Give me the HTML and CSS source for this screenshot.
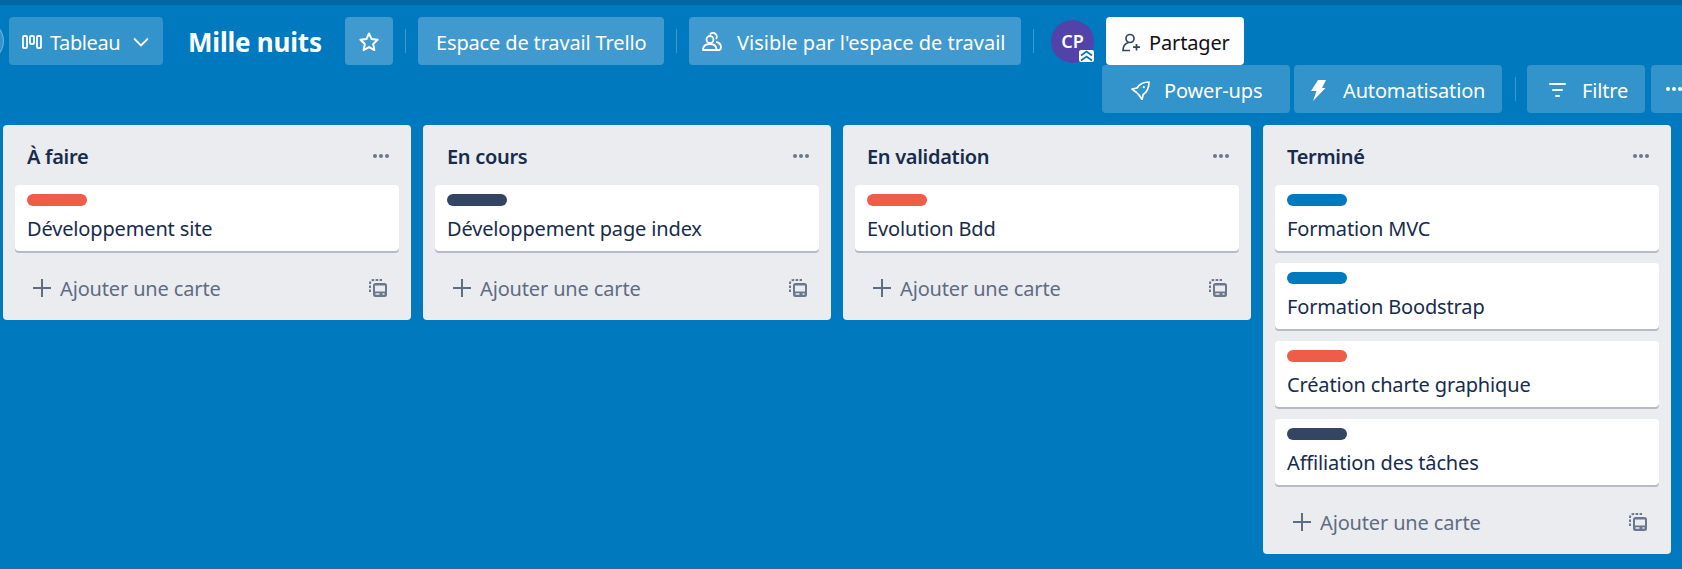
FILE: index.html
```html
<!DOCTYPE html>
<html lang="fr">
<head>
    <meta charset="UTF-8">
    <meta name="viewport" content="width=device-width, initial-scale=1.0">
    <title>Mille nuits</title>
    <link rel="stylesheet" href="styles.css">
</head>
<body>

<svg class="defs" width="0" height="0">
    <symbol id="template" viewBox="0 0 18 18">
        <path d="M1 13V4.500C1 2.500 2.500 1 4.500 1H13" fill="none" stroke="currentColor" stroke-width="2" stroke-dasharray="2.600 1.400"/>
        <path fill-rule="evenodd" d="M6.500 4h9A2.500 2.500 0 0 1 18 6.500v9a2.500 2.500 0 0 1-2.500 2.500h-9A2.500 2.500 0 0 1 4 15.500v-9A2.500 2.500 0 0 1 6.500 4zM6 6.500v6h10v-6zM6.500 14.200v1.500h4v-1.500zM13.500 14.200v1.500h2v-1.500z" fill="currentColor"/>
    </symbol>
</svg>

<div class="topbar"></div>

<header class="board-header">
    <div class="header-row">
        <span class="edge-avatar"></span>
        <button class="btn btn-board">
            <svg class="ico" width="20" height="14" viewBox="0 0 20 14" fill="none" stroke="#fff" stroke-width="1.800">
                <rect x="1" y="1" width="4" height="12" rx="1"/>
                <rect x="8" y="1" width="4" height="8" rx="1"/>
                <rect x="15" y="1" width="4" height="12" rx="1"/>
            </svg>
            <span>Tableau</span>
            <svg class="chevron" width="16" height="10" viewBox="0 0 16 10" fill="none" stroke="#fff" stroke-width="1.800">
                <path d="M1 1.500l7 7 7-7"/>
            </svg>
        </button>
        <h1 class="board-name">Mille nuits</h1>
        <button class="btn btn-star">
            <svg width="22" height="22" viewBox="0 0 22 22" fill="none" stroke="#fff" stroke-width="2" stroke-linejoin="round">
                <path d="M11 2.500l2.600 5.600 6 .7-4.400 4.200 1.200 6.100-5.400-3-5.400 3 1.200-6.100-4.400-4.200 6-.7z"/>
            </svg>
        </button>
        <span class="sep"></span>
        <button class="btn btn-light btn-workspace">Espace de travail Trello</button>
        <span class="sep"></span>
        <button class="btn btn-light btn-visible">
            <svg width="20" height="20" viewBox="0 0 20 20" fill="none" stroke="#fff" stroke-width="1.800">
                <circle cx="8" cy="7.500" r="3.500"/>
                <path d="M1 18c0-3.500 2.500-6 7-6s6.500 2.500 6.500 6z" stroke-linejoin="round"/>
                <path d="M8 2.500a3.600 3.600 0 0 1 5.500-.5 3.600 3.600 0 0 1 .5 5M14 10c3 .5 5 2.500 5 5.500 0 1-.5 2-1.500 2.500h-3"/>
            </svg>
            <span>Visible par l'espace de travail</span>
        </button>
        <span class="sep"></span>
        <div class="avatar">
            CP
            <svg class="avatar-badge" width="15" height="12" viewBox="0 0 15 12">
                <rect width="15" height="12" rx="2" fill="#fff"/>
                <path d="M2 5.500l5.500-4 5.500 4M2 10.500l5.500-4 5.500 4" fill="none" stroke="#0079bf" stroke-width="1.800"/>
            </svg>
        </div>
        <button class="btn btn-share">
            <svg width="19" height="19" viewBox="0 0 19 19" fill="none" stroke="#344563" stroke-width="1.700">
                <circle cx="8" cy="5.500" r="4"/>
                <path d="M6.500 9.500C3 10.500 1 13.500 1 17.500h7M14.500 11v6.500M11 14.200h7"/>
            </svg>
            <span>Partager</span>
        </button>
    </div>

    <div class="header-row tools-row">
        <button class="btn btn-powerups">
            <svg width="19" height="19" viewBox="0 0 19 19" fill="none" stroke="#fff" stroke-width="1.700" stroke-linejoin="round">
                <path d="M18 1C12.500 1 8.500 3 6 7L1 8l4.500 3.500 2.500 2.500 3 4.500 1.200-5C16 11 18 7 18 1z"/>
                <circle cx="12.800" cy="6.200" r="1.100" fill="#fff" stroke="none"/>
            </svg>
            <span>Power-ups</span>
        </button>
        <button class="btn btn-auto">
            <svg width="15" height="21" viewBox="0 0 15 21" fill="#fff">
                <path d="M7 0h8l-4 8h3.500L2 21l3.500-10H0z"/>
            </svg>
            <span>Automatisation</span>
        </button>
        <span class="sep"></span>
        <button class="btn btn-filter">
            <svg width="17" height="14" viewBox="0 0 17 14" fill="#fff">
                <rect width="17" height="2" rx="1"/>
                <rect x="3" y="6" width="11" height="2" rx="1"/>
                <rect x="6" y="12" width="5" height="2" rx="1"/>
            </svg>
            <span>Filtre</span>
        </button>
        <button class="btn btn-more"><span class="dots"></span></button>
    </div>
</header>

<main class="board">
    <section class="list">
        <div class="list-head"><h2>À faire</h2><span class="dots"></span></div>
        <div class="card"><span class="label red"></span><p>Développement site</p></div>
        <div class="list-foot">
            <span class="add"><span class="plus"></span>Ajouter une carte</span>
            <svg class="tpl" width="18" height="18"><use href="#template"/></svg>
        </div>
    </section>

    <section class="list">
        <div class="list-head"><h2>En cours</h2><span class="dots"></span></div>
        <div class="card"><span class="label navy"></span><p>Développement page index</p></div>
        <div class="list-foot">
            <span class="add"><span class="plus"></span>Ajouter une carte</span>
            <svg class="tpl" width="18" height="18"><use href="#template"/></svg>
        </div>
    </section>

    <section class="list">
        <div class="list-head"><h2>En validation</h2><span class="dots"></span></div>
        <div class="card"><span class="label red"></span><p>Evolution Bdd</p></div>
        <div class="list-foot">
            <span class="add"><span class="plus"></span>Ajouter une carte</span>
            <svg class="tpl" width="18" height="18"><use href="#template"/></svg>
        </div>
    </section>

    <section class="list">
        <div class="list-head"><h2>Terminé</h2><span class="dots"></span></div>
        <div class="card"><span class="label blue"></span><p>Formation MVC</p></div>
        <div class="card"><span class="label blue"></span><p>Formation Boodstrap</p></div>
        <div class="card"><span class="label red"></span><p>Création charte graphique</p></div>
        <div class="card"><span class="label navy"></span><p>Affiliation des tâches</p></div>
        <div class="list-foot">
            <span class="add"><span class="plus"></span>Ajouter une carte</span>
            <svg class="tpl" width="18" height="18"><use href="#template"/></svg>
        </div>
    </section>
</main>

</body>
</html>
```

FILE: styles.css
```css
* {
    box-sizing: border-box;
}

html, body {
    height: 100%;
}

body {
    margin: 0;
    background-color: #0079bf;
    color: #172b4d;
    font-family: "Noto Sans", "Open Sans", sans-serif;
    font-size: 20px;
    letter-spacing: -0.15px;
    overflow: hidden;
}

.defs {
    position: absolute;
}

.topbar {
    height: 5px;
    background-color: #0067a3;
}

.board-header {
    padding-top: 12px;
}

.header-row {
    display: flex;
    align-items: center;
    height: 48px;
}

.tools-row {
    margin-left: 1102px;
    width: 620px;
}

.btn {
    display: flex;
    align-items: center;
    flex-shrink: 0;
    height: 48px;
    padding: 2px 18px 0;
    margin-right: 6px;
    border: none;
    border-radius: 4px;
    background-color: rgba(255, 255, 255, 0.2);
    color: #fff;
    font-family: inherit;
    font-size: 20px;
    letter-spacing: inherit;
    white-space: nowrap;
    cursor: pointer;
}

.btn svg {
    flex-shrink: 0;
}

.btn-light {
    background-color: rgba(255, 255, 255, 0.25);
}

.edge-avatar {
    width: 42px;
    height: 42px;
    margin-left: -38px;
    margin-right: 5px;
    border-radius: 50%;
    background-color: rgba(255, 255, 255, 0.2);
    border: 1px solid rgba(255, 255, 255, 0.3);
    flex-shrink: 0;
}

.btn-board {
    width: 154px;
    padding: 2px 14px 0 13px;
    margin-right: 25px;
    letter-spacing: -0.4px;
}

.btn-board .ico {
    margin-right: 8px;
}

.btn-board .chevron {
    margin-left: auto;
}

.board-name {
    width: 133px;
    margin: 0 24px 0 0;
    padding-top: 2px;
    color: #fff;
    font-size: 26px;
    font-weight: 700;
    letter-spacing: -0.2px;
    white-space: nowrap;
}

.btn-star {
    width: 48px;
    padding: 2px 13px 0;
    margin-right: 0;
    background-color: rgba(255, 255, 255, 0.25);
}

.sep {
    width: 1px;
    height: 24px;
    margin: 0 12px;
    background-color: rgba(255, 255, 255, 0.24);
    flex-shrink: 0;
}

.btn-workspace {
    width: 246px;
    margin-right: 0;
}

.btn-visible {
    width: 332px;
    margin-right: 0;
    padding: 2px 13px 0;
    letter-spacing: 0;
}

.btn-visible svg {
    margin-right: 15px;
}

.avatar {
    position: relative;
    display: flex;
    align-items: center;
    justify-content: center;
    width: 43px;
    height: 43px;
    margin: 0 12px 0 5px;
    border-radius: 50%;
    background-color: #5243aa;
    color: #fff;
    font-size: 18px;
    font-weight: 600;
    flex-shrink: 0;
}

.avatar-badge {
    position: absolute;
    right: 0;
    bottom: 1px;
}

.btn-share {
    width: 138px;
    margin-right: 0;
    padding: 2px 16px 0;
    background-color: #fff;
    color: #111;
}

.btn-share svg {
    margin-right: 8px;
}

.btn-powerups {
    width: 188px;
    margin-right: 4px;
    padding: 2px 0 0 29px;
}

.btn-powerups svg {
    margin-right: 14px;
}

.btn-auto {
    width: 208px;
    padding: 2px 0 0 17px;
}

.btn-auto svg {
    margin-right: 17px;
}

.tools-row .sep {
    margin: 0 11px 0 7px;
}

.btn-filter {
    width: 118px;
    padding: 2px 0 0 22px;
}

.btn-filter svg {
    margin-right: 16px;
}

.btn-more {
    width: 48px;
    padding: 0 0 0 15px;
    margin-right: 0;
}

.dots,
.dots::before,
.dots::after {
    display: block;
    width: 4px;
    height: 4px;
    border-radius: 50%;
    background-color: currentColor;
}

.dots {
    position: relative;
    margin: 0 6px;
    flex-shrink: 0;
}

.dots::before,
.dots::after {
    content: "";
    position: absolute;
    top: 0;
}

.dots::before {
    left: -6px;
}

.dots::after {
    left: 6px;
}

.board {
    display: flex;
    align-items: flex-start;
    gap: 12px;
    margin-top: 12px;
    padding-left: 3px;
}

.list {
    width: 408px;
    flex-shrink: 0;
    padding: 0 12px;
    border-radius: 4px;
    background-color: #ebecf0;
}

.list-head {
    display: flex;
    align-items: center;
    justify-content: space-between;
    height: 60px;
    padding: 2px 10px 0 12px;
    color: #6b778c;
}

.list-head h2 {
    margin: 0;
    color: #172b4d;
    font-size: 20px;
    font-weight: 600;
    letter-spacing: -0.3px;
}

.card {
    height: 66px;
    margin-bottom: 12px;
    padding: 9px 12px 0;
    border-radius: 4px;
    background-color: #fff;
    box-shadow: 0 2px 0 #b6b9c7;
}

.card p {
    margin: 0;
    padding-top: 10px;
    line-height: 26px;
}

.label {
    display: block;
    width: 60px;
    height: 12px;
    border-radius: 6px;
}

.red {
    background-color: #ef5c48;
}

.navy {
    background-color: #344563;
}

.blue {
    background-color: #0079bf;
}

.list-foot {
    display: flex;
    align-items: center;
    justify-content: space-between;
    height: 69px;
    margin-top: -12px;
    padding: 5px 12px 0 18px;
    color: #5e6c84;
}

.add {
    display: flex;
    align-items: center;
}

.plus {
    position: relative;
    display: block;
    width: 18px;
    height: 18px;
    margin-right: 9px;
}

.plus::before,
.plus::after {
    content: "";
    position: absolute;
    background-color: #5e6c84;
}

.plus::before {
    left: 8px;
    top: 0;
    width: 2px;
    height: 18px;
}

.plus::after {
    left: 0;
    top: 8px;
    width: 18px;
    height: 2px;
}

.tpl {
    color: #6b778c;
}
```
